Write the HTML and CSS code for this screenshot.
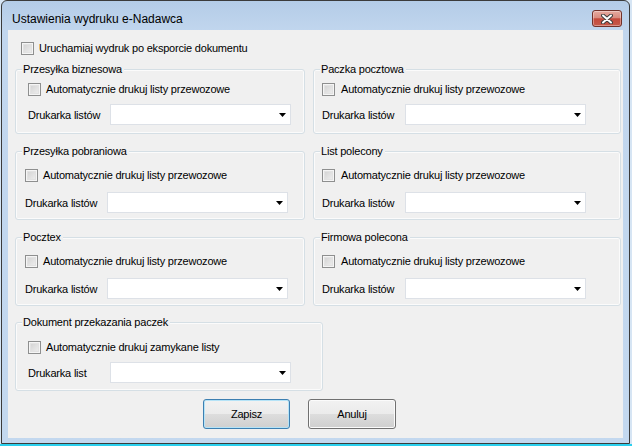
FILE: index.html
```html
<!DOCTYPE html>
<html lang="pl">
<head>
<meta charset="utf-8">
<title>Ustawienia wydruku e-Nadawca</title>
<link rel="stylesheet" href="styles.css">
</head>
<body>
<div class="window">
  <div class="titlebar">
    <span class="title">Ustawienia wydruku e-Nadawca</span>
    <span class="close"><svg width="12" height="10" viewBox="0 0 12 10"><path d="M2 1.5 L10 8.5 M10 1.5 L2 8.5" stroke="#3d3d3d" stroke-width="4" stroke-linecap="round"/><path d="M2 1.5 L10 8.5 M10 1.5 L2 8.5" stroke="#fff" stroke-width="2" stroke-linecap="round"/></svg></span>
  </div>
  <div class="client">
    <div class="check top"><span class="box"></span><span>Uruchamiaj wydruk po eksporcie dokumentu</span></div>

    <div class="row row-1">
      <div class="group left gA wide">
        <div class="legend">Przesyłka biznesowa</div>
        <div class="check"><span class="box"></span><span>Automatycznie drukuj listy przewozowe</span></div>
        <div class="field"><span class="flabel">Drukarka listów</span><span class="combo"><svg width="7" height="4" viewBox="0 0 7 4"><path d="M0 0H7L3.5 4Z" fill="#000"/></svg></span></div>
      </div>
      <div class="group right gA">
        <div class="legend">Paczka pocztowa</div>
        <div class="check"><span class="box"></span><span>Automatycznie drukuj listy przewozowe</span></div>
        <div class="field"><span class="flabel">Drukarka listów</span><span class="combo"><svg width="7" height="4" viewBox="0 0 7 4"><path d="M0 0H7L3.5 4Z" fill="#000"/></svg></span></div>
      </div>
    </div>

    <div class="row row-2">
      <div class="group left gB narrow">
        <div class="legend">Przesyłka pobraniowa</div>
        <div class="check"><span class="box"></span><span>Automatycznie drukuj listy przewozowe</span></div>
        <div class="field"><span class="flabel">Drukarka listów</span><span class="combo"><svg width="7" height="4" viewBox="0 0 7 4"><path d="M0 0H7L3.5 4Z" fill="#000"/></svg></span></div>
      </div>
      <div class="group right gB">
        <div class="legend">List polecony</div>
        <div class="check"><span class="box"></span><span>Automatycznie drukuj listy przewozowe</span></div>
        <div class="field"><span class="flabel">Drukarka listów</span><span class="combo"><svg width="7" height="4" viewBox="0 0 7 4"><path d="M0 0H7L3.5 4Z" fill="#000"/></svg></span></div>
      </div>
    </div>

    <div class="row row-3">
      <div class="group left gB narrow">
        <div class="legend">Pocztex</div>
        <div class="check"><span class="box"></span><span>Automatycznie drukuj listy przewozowe</span></div>
        <div class="field"><span class="flabel">Drukarka listów</span><span class="combo"><svg width="7" height="4" viewBox="0 0 7 4"><path d="M0 0H7L3.5 4Z" fill="#000"/></svg></span></div>
      </div>
      <div class="group right gB">
        <div class="legend">Firmowa polecona</div>
        <div class="check"><span class="box"></span><span>Automatycznie drukuj listy przewozowe</span></div>
        <div class="field"><span class="flabel">Drukarka listów</span><span class="combo"><svg width="7" height="4" viewBox="0 0 7 4"><path d="M0 0H7L3.5 4Z" fill="#000"/></svg></span></div>
      </div>
    </div>

    <div class="group bottom gC wide">
      <div class="legend">Dokument przekazania paczek</div>
      <div class="check"><span class="box"></span><span>Automatycznie drukuj zamykane listy</span></div>
      <div class="field"><span class="flabel">Drukarka list</span><span class="combo"><svg width="7" height="4" viewBox="0 0 7 4"><path d="M0 0H7L3.5 4Z" fill="#000"/></svg></span></div>
    </div>

    <div class="buttons">
      <button class="btn btn-default">Zapisz</button>
      <button class="btn btn-cancel">Anuluj</button>
    </div>
  </div>
</div>
</body>
</html>
```
FILE: styles.css
```css
* { box-sizing: border-box; }
html, body { margin: 0; padding: 0; }
body {
  width: 632px;
  height: 446px;
  overflow: hidden;
  background: linear-gradient(to top, #2bd0ee 0, #2bd0ee 2px, #d6e5f4 2px);
  font-family: "Liberation Sans", Arial, sans-serif;
  font-size: 11px;
  letter-spacing: -0.2px;
  color: #000;
}
.window {
  margin-left: 1px;
  width: 629px;
  height: 444px;
  border: 1px solid #3b3b3b;
  border-radius: 6px 6px 0 0;
  background: linear-gradient(#b4cce7, #c1d6ee 30px, #c3d8ef);
  display: flex;
  flex-direction: column;
}
.titlebar {
  height: 29px;
  flex: none;
  display: flex;
  align-items: flex-start;
  padding: 0 7px 0 10px;
}
.title {
  flex: 1;
  margin-top: 11px;
  line-height: 14px;
  font-size: 12px;
  letter-spacing: 0;
  color: #000;
  white-space: nowrap;
}
.close {
  margin-top: 9px;
  width: 30px;
  height: 17px;
  border: 1px solid #71312a;
  border-radius: 3px;
  background: linear-gradient(#e6aaa0 0, #d98c80 45%, #c4493b 52%, #c65a4a 100%);
  box-shadow: inset 0 0 0 1px rgba(255, 255, 255, 0.35);
  display: flex;
  align-items: center;
  justify-content: center;
}
.close svg { display: block; }
.client {
  flex: 1;
  margin: 0 6px 5px;
  background: #f0f0f0;
  padding: 12px 0 0 7px;
  display: flex;
  flex-direction: column;
  align-items: flex-start;
}
.check {
  display: flex;
  align-items: center;
  height: 13px;
  line-height: 13px;
  white-space: nowrap;
}
.check.top { margin-left: 6px; }
.box {
  flex: none;
  width: 13px;
  height: 13px;
  margin-right: var(--gap, 5px);
  border: 1px solid #8e8f8f;
  background: linear-gradient(135deg, #cfcfcf, #f2f2f2);
  box-shadow: inset 0 0 0 1px #f5f5f5, inset 0 0 0 2px #e2e2e2;
}
.row {
  display: flex;
  gap: 8px;
  align-items: stretch;
}
.row-1 { margin-top: 14px; }
.row-2 { margin-top: 17px; }
.row-3 { margin-top: 17px; }
.group {
  border: 1px solid #d5dfe5;
  border-radius: 3px;
  box-shadow: inset 0 0 0 1px #fbfbfb;
  display: flex;
  flex-direction: column;
  align-items: flex-start;
  padding-bottom: var(--pb);
  --in: 8px;
  --lw: 83px;
  --gap: 6px;
}
.group.wide { --in: 12px; --lw: 82px; --gap: 5px; }
.group.narrow { --in: 9px; --lw: 82px; --gap: 5px; }
.group.left { width: 290px; }
.group.right { width: 308px; }
.group.bottom { width: 308px; margin-top: 16px; }
.gA { --ct: 7px; --dt: 8px; --pb: 8px; }
.gB { --ct: 11px; --dt: 10px; --pb: 6px; }
.gC { --ct: 12px; --dt: 8px; --pb: 7px; }
.legend {
  margin: -7px 0 0 6px;
  padding: 0 2px 0 1px;
  line-height: 13px;
  background: #f0f0f0;
  white-space: nowrap;
}
.group .check {
  margin-top: var(--ct);
  margin-left: var(--in);
}
.field {
  display: flex;
  align-items: center;
  margin-top: var(--dt);
  margin-left: var(--in);
}
.flabel {
  width: var(--lw);
  white-space: nowrap;
}
.combo {
  width: 181px;
  height: 21px;
  background: #fff;
  border: 1px solid #dde1e7;
  display: flex;
  justify-content: flex-end;
  align-items: flex-start;
  padding: 8px 4px 0 0;
}
.combo svg { display: block; }
.buttons {
  display: flex;
  gap: 18px;
  margin: 8px 0 0 188px;
}
.btn {
  height: 30px;
  width: 87px;
  padding: 0;
  font-family: "Liberation Sans", Arial, sans-serif;
  font-size: 11px;
  letter-spacing: -0.2px;
  color: #000;
  border: 1px solid #707070;
  border-radius: 3px;
  background: linear-gradient(#f2f2f2 0, #ebebeb 50%, #dddddd 50%, #cfcfcf 100%);
  box-shadow: inset 0 0 0 1px #fbfbfb;
}
.btn-default {
  border-color: #3c7fb1;
  box-shadow: inset 0 0 0 1px #b5e3f7;
}
.btn-cancel { width: 88px; }
```
